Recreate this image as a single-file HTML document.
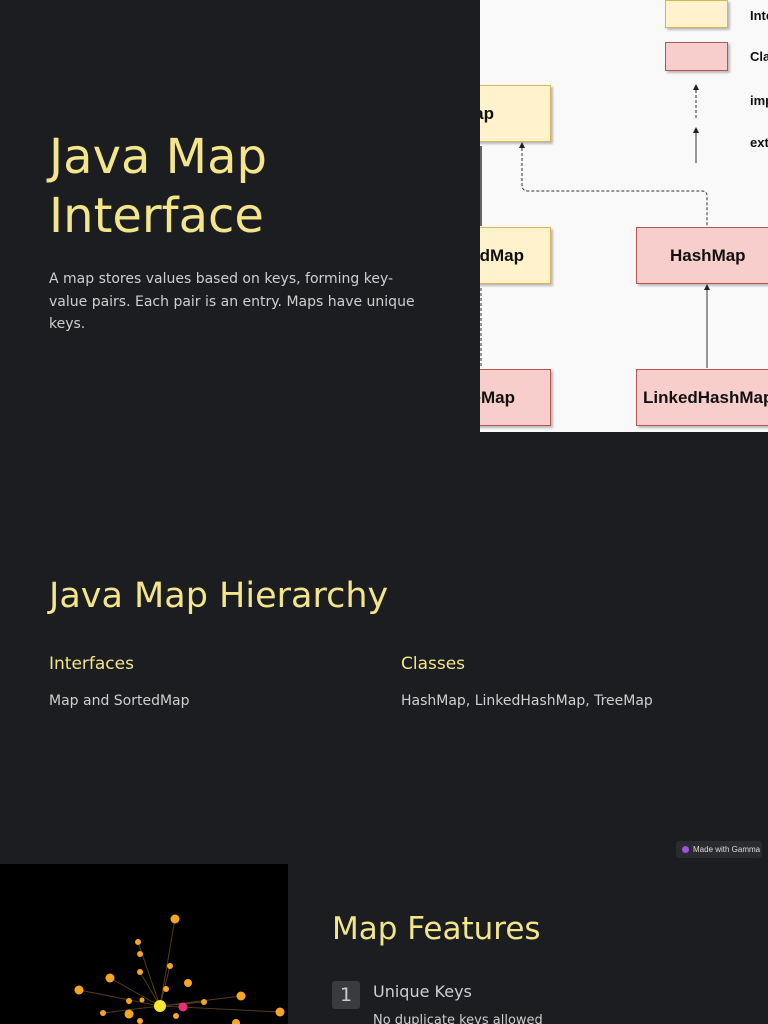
<!DOCTYPE html>
<html><head><meta charset="utf-8"><style>
*{margin:0;padding:0;box-sizing:border-box}
html,body{width:768px;height:1024px;overflow:hidden}
body{background:#1c1d20;font-family:"DejaVu Sans","Liberation Sans",sans-serif;position:relative}
.a{position:absolute}
.y{color:#f3e58a}
.t{color:#cfcfcf}
.diag{left:480px;top:0;width:288px;height:432px;background:#f9f9f9;overflow:hidden}
.bx{position:absolute;font-family:"Liberation Sans",sans-serif;font-weight:bold;font-size:17px;color:#111;display:flex;align-items:center;justify-content:center;box-shadow:2px 2px 2px rgba(0,0,0,.25)}
.yel{background:#fff2cc;border:1px solid #d6b656}
.pk{background:#f8cecc;border:1px solid #b85450}
.lg{position:absolute;left:270px;font-family:"Liberation Sans",sans-serif;font-weight:bold;font-size:13px;color:#111}
</style></head><body>
<div class="a y" style="left:49px;top:128px;font-size:48px;line-height:59px">Java Map<br>Interface</div>
<div class="a t" style="left:49px;top:268px;width:375px;font-size:14px;line-height:22.5px">A map stores values based on keys, forming key-value pairs. Each pair is an entry. Maps have unique keys.</div>

<div class="a diag">
<div class="bx yel" style="left:-80px;top:85px;width:151px;height:57px;justify-content:flex-end;padding-right:56px">ap</div>
<div class="bx yel" style="left:-80px;top:227px;width:151px;height:57px;justify-content:flex-end;padding-right:26px">dMap</div>
<div class="bx pk" style="left:-80px;top:369px;width:151px;height:57px;justify-content:flex-end;padding-right:35px">eMap</div>
<div class="bx pk" style="left:156px;top:227px;width:140px;height:57px;justify-content:flex-start;padding-left:33px">HashMap</div>
<div class="bx pk" style="left:156px;top:369px;width:140px;height:57px;justify-content:flex-start;padding-left:6px">LinkedHashMap</div>
<div class="bx yel" style="left:185px;top:0;width:63px;height:28px"></div>
<div class="bx pk" style="left:185px;top:42px;width:63px;height:29px"></div>
<div class="lg" style="top:8px">Inte</div>
<div class="lg" style="top:49px">Cla</div>
<div class="lg" style="top:93px">imp</div>
<div class="lg" style="top:135px">ext</div>
<svg class="a" style="left:0;top:0" width="288" height="432">
<g stroke="#333" fill="none" stroke-width="1">
<path d="M42 148 V185 Q42 191 48 191 H222 Q227 191 227 196 V226" stroke-dasharray="3 2"/>
<path d="M227 288 V368"/>
<path d="M216 90 V120" stroke-dasharray="3 2"/>
<path d="M216 132 V163"/>
<path d="M1 146 V226" stroke-width="1.5"/><path d="M1 288 V368" stroke-dasharray="3 2"/>
</g>
<g fill="#222"><path d="M42 142 l-3 6 h6z"/><path d="M227 284 l-3 6 h6z"/><path d="M216 84 l-3 6 h6z"/><path d="M216 127 l-3 6 h6z"/></g>
</svg>
</div>

<div class="a y" style="left:49px;top:576px;font-size:35px">Java Map Hierarchy</div>
<div class="a y" style="left:49px;top:654px;font-size:17px">Interfaces</div>
<div class="a t" style="left:49px;top:693px;font-size:14px">Map and SortedMap</div>
<div class="a y" style="left:401px;top:654px;font-size:17px">Classes</div>
<div class="a t" style="left:401px;top:693px;font-size:14px">HashMap, LinkedHashMap, TreeMap</div>

<div class="a" style="left:676px;top:841px;width:86px;height:17px;background:#2a2b2f;border-radius:3px;color:#ddd;font-size:8px;font-family:'Liberation Sans',sans-serif;line-height:17px;padding-left:17px">Made with Gamma<span class="a" style="left:6px;top:5px;width:7px;height:7px;border-radius:50%;background:#a050e0"></span></div>

<div class="a" style="left:0;top:864px;width:288px;height:160px;background:#000;overflow:hidden">
<svg width="288" height="160">
<g stroke="#553a18" stroke-width="1">
<path d="M160 142 L175 55 M160 142 L138 78 M160 142 L110 114 M160 142 L79 126 M160 142 L241 132 M160 142 L280 148 M160 142 L204 138 M160 142 L103 149 M160 142 L170 102 M160 142 L140 108"/>
</g>
<g fill="#f5a623">
<circle cx="175" cy="55" r="4.5"/><circle cx="138" cy="78" r="3"/><circle cx="140" cy="90" r="3"/><circle cx="140" cy="108" r="3"/><circle cx="110" cy="114" r="4.5"/><circle cx="79" cy="126" r="4.5"/><circle cx="170" cy="102" r="3"/><circle cx="188" cy="119" r="4"/><circle cx="166" cy="125" r="3"/><circle cx="129" cy="137" r="3"/><circle cx="142" cy="136" r="2.5"/><circle cx="204" cy="138" r="3"/><circle cx="241" cy="132" r="4.5"/><circle cx="103" cy="149" r="3"/><circle cx="129" cy="150" r="4.5"/><circle cx="176" cy="152" r="3"/><circle cx="280" cy="148" r="4.5"/><circle cx="236" cy="159" r="4"/><circle cx="140" cy="157" r="3"/>
</g>
<circle cx="160" cy="142" r="6" fill="#f8e830"/><circle cx="183" cy="143" r="4.5" fill="#e8307a"/>
</svg></div>

<div class="a y" style="left:332px;top:911px;font-size:31px">Map Features</div>
<div class="a" style="left:332px;top:981px;width:28px;height:28px;background:#3a3b3e;border-radius:3px;color:#ccc;font-size:19px;text-align:center;line-height:28px">1</div>
<div class="a t" style="left:373px;top:982px;font-size:16px">Unique Keys</div>
<div class="a t" style="left:373px;top:1013px;font-size:13px">No duplicate keys allowed</div>
</body></html>
